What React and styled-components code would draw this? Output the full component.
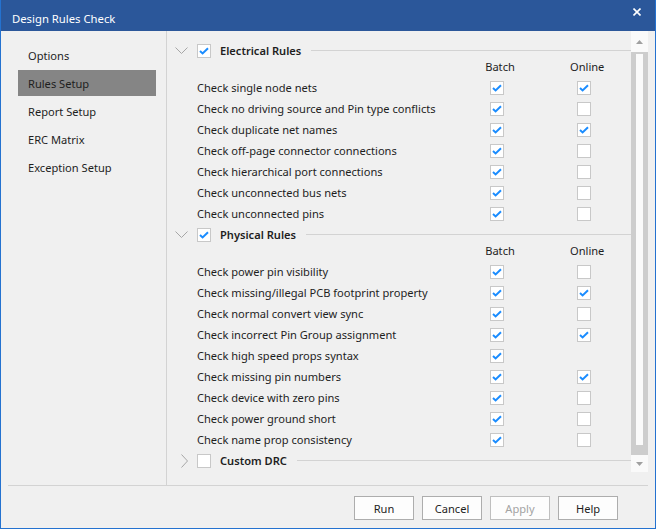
import React from "react";
import styled, { createGlobalStyle } from "styled-components";

const GlobalStyle = createGlobalStyle`
  html, body {
    margin: 0;
    padding: 0;
    background: #f0f0f0;
  }
  * {
    box-sizing: border-box;
  }
`;

const Window = styled.div`
  width: 656px;
  height: 529px;
  display: flex;
  flex-direction: column;
  border: 1px solid #2472d0;
  border-top: none;
  background: #f0f0f0;
  font-family: "Noto Sans", "Open Sans", sans-serif;
  font-size: 11.1px;
  color: #1e1e1e;
`;

const TitleBar = styled.div`
  height: 31px;
  flex: none;
  display: flex;
  justify-content: space-between;
  align-items: flex-start;
  padding: 0 14px 0 11px;
  background: #2b579a;
  color: #fff;
`;

const Title = styled.span`
  margin-top: 11px;
  line-height: 16px;
  font-size: 11.3px;
`;

const CloseIcon = styled.svg`
  margin-top: 8px;
`;

const Body = styled.div`
  flex: 1;
  display: flex;
  flex-direction: column;
  padding: 0 7px;
`;

const Main = styled.div`
  height: 455px;
  display: flex;
  border-bottom: 1px solid #d3d3d3;
`;

const Nav = styled.ul`
  width: 159px;
  flex: none;
  margin: 0;
  padding: 11px 10px 0;
  list-style: none;
  border-right: 1px solid #d3d3d3;
  display: flex;
  flex-direction: column;
  gap: 2px;
`;

const NavItem = styled.li`
  height: 26px;
  line-height: 27px;
  padding-left: 10px;
  background: ${({ active }) => (active ? "#858585" : "transparent")};
`;

const RightPane = styled.div`
  flex: 1;
  display: flex;
  align-items: flex-start;
  padding-bottom: 14px;
`;

const Content = styled.div`
  flex: 1;
  padding-top: 9px;
`;

const GroupHeader = styled.div`
  height: 21px;
  display: flex;
  align-items: center;
  padding-left: 8px;
`;

const Chevron = styled.span`
  width: 14px;
  display: flex;
  justify-content: ${({ open }) => (open ? "flex-start" : "flex-end")};
  margin-right: 8px;
  padding-right: ${({ open }) => (open ? 0 : "1px")};
`;

const GroupLabel = styled.span`
  font-weight: 600;
  margin-left: 9px;
`;

const Rule = styled.div`
  flex: 1;
  height: 1px;
  background: #d3d3d3;
  margin-left: 10px;
`;

const Grid = styled.div`
  display: grid;
  grid-template-columns: 280px 40px 47px 40px;
  padding-left: 30px;
`;

const ColHead = styled.div`
  height: 16px;
  line-height: 12px;
  text-align: center;
  padding-left: 6px;
  grid-column: ${({ col }) => col};
`;

const Cell = styled.div`
  height: 21px;
  display: flex;
  align-items: center;
  justify-content: ${({ center }) => (center ? "center" : "flex-start")};
  white-space: nowrap;
`;

const Box = styled.span`
  width: 14px;
  height: 14px;
  flex: none;
  display: inline-flex;
  align-items: center;
  justify-content: center;
  background: #fff;
  border: 1px solid #c8c8c8;
`;

const Scrollbar = styled.div`
  width: 17px;
  height: 441px;
  flex: none;
  display: flex;
  flex-direction: column;
  background: #fafafa;
`;

const ArrowButton = styled.div`
  height: ${({ h }) => h}px;
  display: flex;
  align-items: center;
  justify-content: center;
`;

const Thumb = styled.div`
  flex: 1;
  background: #cdcdcd;
  padding: 2px 5px 10px;
  display: flex;
`;

const ThumbInner = styled.div`
  flex: 1;
  background: #fafafa;
`;

const ButtonBar = styled.div`
  flex: 1;
  display: flex;
  justify-content: flex-end;
  align-items: flex-start;
  gap: 8px;
  padding: 10px 30px 0 0;
`;

const Button = styled.button`
  width: 60px;
  height: 24px;
  padding: 0;
  font: inherit;
  background: #fdfdfd;
  border: 1px solid ${({ disabled }) => (disabled ? "#bfbfbf" : "#adadad")};
  color: ${({ disabled }) => (disabled ? "#a3a3a3" : "#1e1e1e")};
`;

const electrical = [
  ["Check single node nets", true, true],
  ["Check no driving source and Pin type conflicts", true, false],
  ["Check duplicate net names", true, true],
  ["Check off-page connector connections", true, false],
  ["Check hierarchical port connections", true, false],
  ["Check unconnected bus nets", true, false],
  ["Check unconnected pins", true, false],
];

const physical = [
  ["Check power pin visibility", true, false],
  ["Check missing/illegal PCB footprint property", true, true],
  ["Check normal convert view sync", true, false],
  ["Check incorrect Pin Group assignment", true, true],
  ["Check high speed props syntax", true, null],
  ["Check missing pin numbers", true, true],
  ["Check device with zero pins", true, false],
  ["Check power ground short", true, false],
  ["Check name prop consistency", true, false],
];

function CheckBox({ checked }) {
  return (
    <Box>
      {checked && (
        <svg width="10" height="8" viewBox="0 0 10 8">
          <polyline
            points="1,4 3.6,6.4 9,1.2"
            fill="none"
            stroke="#1a8cff"
            strokeWidth="2"
          />
        </svg>
      )}
    </Box>
  );
}

function Group({ title, open, checked, rows }) {
  return (
    <>
      <GroupHeader>
        <Chevron open={open}>
          {open ? (
            <svg width="13" height="7" viewBox="0 0 13 7">
              <polyline points="0.5,0.5 6.5,6.5 12.5,0.5" fill="none" stroke="#a6a6a6" />
            </svg>
          ) : (
            <svg width="7" height="14" viewBox="0 0 7 14">
              <polyline points="0.5,0.5 6.5,7 0.5,13.5" fill="none" stroke="#a6a6a6" />
            </svg>
          )}
        </Chevron>
        <CheckBox checked={checked} />
        <GroupLabel>{title}</GroupLabel>
        <Rule />
      </GroupHeader>
      {open && (
        <Grid>
          <ColHead col={2}>Batch</ColHead>
          <ColHead col={4}>Online</ColHead>
          {rows.map(([label, batch, online]) => (
            <React.Fragment key={label}>
              <Cell>{label}</Cell>
              <Cell center>
                <CheckBox checked={batch} />
              </Cell>
              <Cell />
              <Cell center>{online !== null && <CheckBox checked={online} />}</Cell>
            </React.Fragment>
          ))}
        </Grid>
      )}
    </>
  );
}

export default function App() {
  return (
    <>
      <GlobalStyle />
      <Window>
        <TitleBar>
          <Title>Design Rules Check</Title>
          <CloseIcon width="8" height="8" viewBox="0 0 8 8">
            <path d="M0.5 0.5 L7.5 7.5 M7.5 0.5 L0.5 7.5" stroke="#fff" strokeWidth="1.6" />
          </CloseIcon>
        </TitleBar>
        <Body>
          <Main>
            <Nav>
              <NavItem>Options</NavItem>
              <NavItem active>Rules Setup</NavItem>
              <NavItem>Report Setup</NavItem>
              <NavItem>ERC Matrix</NavItem>
              <NavItem>Exception Setup</NavItem>
            </Nav>
            <RightPane>
              <Content>
                <Group title="Electrical Rules" open checked rows={electrical} />
                <Group title="Physical Rules" open checked rows={physical} />
                <Group title="Custom DRC" open={false} checked={false} />
              </Content>
              <Scrollbar>
                <ArrowButton h={21}>
                  <svg width="7" height="4" viewBox="0 0 7 4">
                    <polygon points="0,4 3.5,0 7,4" fill="#a0a0a0" />
                  </svg>
                </ArrowButton>
                <Thumb>
                  <ThumbInner />
                </Thumb>
                <ArrowButton h={17}>
                  <svg width="7" height="4" viewBox="0 0 7 4">
                    <polygon points="0,0 3.5,4 7,0" fill="#a0a0a0" />
                  </svg>
                </ArrowButton>
              </Scrollbar>
            </RightPane>
          </Main>
          <ButtonBar>
            <Button>Run</Button>
            <Button>Cancel</Button>
            <Button disabled>Apply</Button>
            <Button>Help</Button>
          </ButtonBar>
        </Body>
      </Window>
    </>
  );
}
